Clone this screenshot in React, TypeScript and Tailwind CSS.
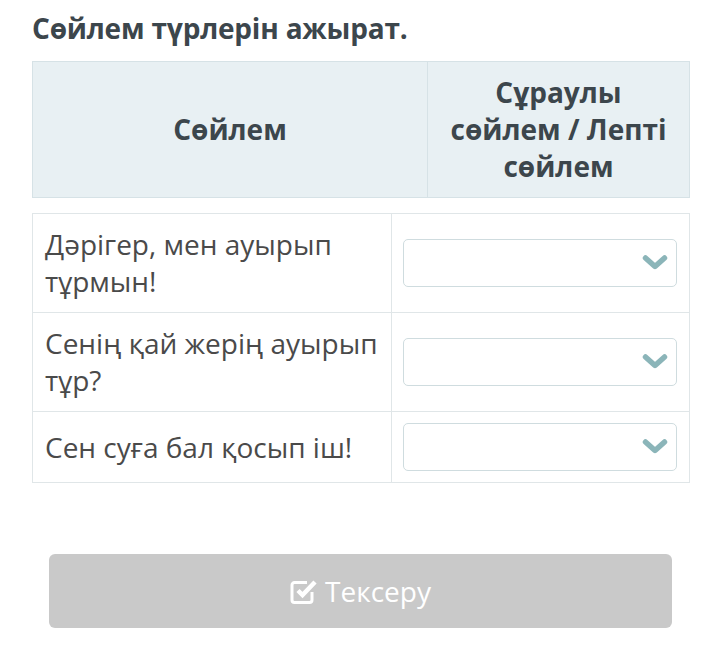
import React from "react";

const rows = [
  "Дәрігер, мен ауырып тұрмын!",
  "Сенің қай жерің ауырып тұр?",
  "Сен суға бал қосып іш!",
];

function Chevron() {
  return (
    <svg width="26" height="18" viewBox="0 0 26 18" className="shrink-0">
      <path d="M3.5 4 L13 12.5 L22.5 4" fill="none" stroke="#8bb5b9" strokeWidth="5.5" strokeLinecap="round" strokeLinejoin="round" />
    </svg>
  );
}

function CheckSquare() {
  return (
    <svg width="28" height="28" viewBox="0 0 28 28">
      <path d="M22 15 V23 a2.5 2.5 0 0 1 -2.5 2.5 H4.5 a2.5 2.5 0 0 1 -2.5 -2.5 V8 a2.5 2.5 0 0 1 2.5 -2.5 H17" fill="none" stroke="white" strokeWidth="3" />
      <path d="M8 13.5 L12.5 18 L25 5" fill="none" stroke="white" strokeWidth="4.5" />
    </svg>
  );
}

export default function App() {
  return (
    <div className="w-[720px] h-[647px] bg-white" style={{ fontFamily: '"Open Sans", "Noto Sans", sans-serif' }}>
      <div className="pl-[32px] pr-[30px] pt-[8px]">
        <h1 className="text-[28px] leading-[40px] font-bold text-[#3c464c] tracking-[-0.2px]">Сөйлем түрлерін ажырат.</h1>
        <div className="mt-[13px] grid grid-cols-[395px_1fr] bg-[#e8f0f3] border border-[#d6e2e6] text-[28px] leading-[37px] font-bold text-[#3c464c]">
          <div className="flex items-center justify-center border-r border-[#d6e2e6] py-[12px]">Сөйлем</div>
          <div className="flex items-center justify-center text-center py-[12px] px-[6px]">
            <span>Сұраулы<br />сөйлем / Лепті<br />сөйлем</span>
          </div>
        </div>
        <div className="mt-[15px] border border-[#e0e6e8] text-[28px] leading-[37px] text-[#4a4a4a]">
          {rows.map((r, i) => (
            <div key={i} className={`grid grid-cols-[359px_1fr] ${i > 0 ? "border-t border-[#e0e6e8]" : ""}`}>
              <div className="border-r border-[#e0e6e8] pl-[12px] pr-[4px] py-[12px] flex items-center">{r}</div>
              <div className="flex items-center pl-[11px] pr-[12px] py-[11px]">
                <div className="w-full h-[48px] rounded-[5px] border border-[#cfdcdf] flex items-center justify-end pr-[8px]">
                  <Chevron />
                </div>
              </div>
            </div>
          ))}
        </div>
      </div>
      <div className="pl-[49px] pr-[48px] mt-[71px]">
        <div className="h-[74px] rounded-[6px] bg-[#c9c9c9] flex items-center justify-center gap-[7px] text-white text-[28px]">
          <CheckSquare />
          <span>Тексеру</span>
        </div>
      </div>
    </div>
  );
}
